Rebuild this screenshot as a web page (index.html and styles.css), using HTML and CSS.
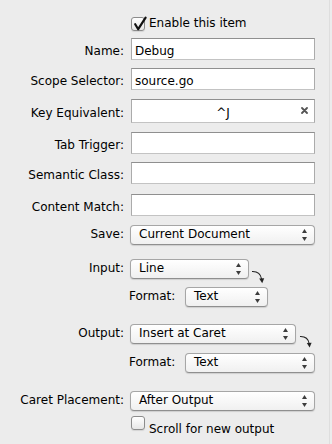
FILE: index.html
```html
<!DOCTYPE html>
<html>
<head>
<meta charset="utf-8">
<link rel="stylesheet" href="styles.css">
</head>
<body>
<div class="panel">
  <div class="check-row top">
    <span class="cb"><svg class="tick" width="16" height="16" viewBox="0 0 16 16"><path d="M4.2 7.2 L7.2 12.2 L14.6 0.6" fill="none" stroke="#111" stroke-width="2.2" stroke-linejoin="round" stroke-linecap="round"/></svg></span>
    <span class="cb-label">Enable this item</span>
  </div>

  <div class="row m7">
    <span class="lbl">Name:</span>
    <div class="field">Debug</div>
  </div>
  <div class="row m8">
    <span class="lbl">Scope Selector:</span>
    <div class="field">source.go</div>
  </div>
  <div class="row krow m9">
    <span class="lbl">Key Equivalent:</span>
    <div class="field key">^J<svg class="clear" width="7" height="7" viewBox="0 0 7 7"><path d="M1 1 L6 6 M6 1 L1 6" stroke="#555" stroke-width="1.8" stroke-linecap="round"/></svg></div>
  </div>
  <div class="row m9">
    <span class="lbl">Tab Trigger:</span>
    <div class="field"></div>
  </div>
  <div class="row m8">
    <span class="lbl">Semantic Class:</span>
    <div class="field"></div>
  </div>
  <div class="row m10">
    <span class="lbl">Content Match:</span>
    <div class="field"></div>
  </div>

  <div class="row prow m9">
    <span class="lbl">Save:</span>
    <div class="popup w-full"><span class="ptext">Current Document</span><svg class="updown" width="5" height="12" viewBox="0 0 5 12"><path d="M0 4 L2.5 0 L5 4 Z M0 8 L5 8 L2.5 12 Z" fill="#3c3c3c"/></svg></div>
  </div>

  <div class="row prow m14">
    <span class="lbl">Input:</span>
    <div class="popup w-input"><span class="ptext">Line</span><svg class="updown" width="5" height="12" viewBox="0 0 5 12"><path d="M0 4 L2.5 0 L5 4 Z M0 8 L5 8 L2.5 12 Z" fill="#3c3c3c"/></svg></div>
    <svg class="curl" width="14" height="16" viewBox="0 0 14 16"><path d="M1 3.5 C5.5 3.3 9.6 5.5 10.6 11" fill="none" stroke="#222" stroke-width="1.1"/><path d="M8.2 10.6 L13.2 10.2 L11.2 15.2 Z" fill="#222"/></svg>
  </div>
  <div class="row sub m8">
    <span class="sublbl">Format:</span>
    <div class="popup w-fmt1"><span class="ptext">Text</span><svg class="updown" width="5" height="12" viewBox="0 0 5 12"><path d="M0 4 L2.5 0 L5 4 Z M0 8 L5 8 L2.5 12 Z" fill="#3c3c3c"/></svg></div>
  </div>

  <div class="row prow m17">
    <span class="lbl">Output:</span>
    <div class="popup w-output"><span class="ptext">Insert at Caret</span><svg class="updown" width="5" height="12" viewBox="0 0 5 12"><path d="M0 4 L2.5 0 L5 4 Z M0 8 L5 8 L2.5 12 Z" fill="#3c3c3c"/></svg></div>
    <svg class="curl c2" width="14" height="16" viewBox="0 0 14 16"><path d="M1 3.5 C5.5 3.3 9.3 5.5 10.1 10.5" fill="none" stroke="#222" stroke-width="1.1"/><path d="M7.8 10 L12.6 9.8 L10.6 14.5 Z" fill="#222"/></svg>
  </div>
  <div class="row sub m9">
    <span class="sublbl">Format:</span>
    <div class="popup w-fmt2"><span class="ptext">Text</span><svg class="updown" width="5" height="12" viewBox="0 0 5 12"><path d="M0 4 L2.5 0 L5 4 Z M0 8 L5 8 L2.5 12 Z" fill="#3c3c3c"/></svg></div>
  </div>

  <div class="row prow m18">
    <span class="lbl">Caret Placement:</span>
    <div class="popup w-full"><span class="ptext">After Output</span><svg class="updown" width="5" height="12" viewBox="0 0 5 12"><path d="M0 4 L2.5 0 L5 4 Z M0 8 L5 8 L2.5 12 Z" fill="#3c3c3c"/></svg></div>
  </div>

  <div class="check-row bottom">
    <span class="cb"></span>
    <span class="cb-label">Scroll for new output</span>
  </div>
</div>
</body>
</html>
```

FILE: styles.css
```css
html, body {
  margin: 0;
  padding: 0;
  background: #ececec;
}

body {
  font-family: "DejaVu Sans", "Liberation Sans", sans-serif;
  font-size: 12px;
  line-height: 14px;
  color: #000;
}

.panel {
  box-sizing: border-box;
  width: 330px;
  height: 444px;
  padding-top: 16px;
  border-right: 1px solid #dedede;
  overflow: hidden;
}

.m7 { margin-top: 7px; }
.m8 { margin-top: 8px; }
.m9 { margin-top: 9px; }
.m10 { margin-top: 10px; }
.m14 { margin-top: 14px; }
.m17 { margin-top: 17px; }
.m18 { margin-top: 18px; }

/* checkbox rows */
.check-row {
  display: flex;
  align-items: flex-start;
  padding-left: 131px;
}

.check-row.bottom {
  margin-top: 5px;
}

.cb {
  box-sizing: border-box;
  position: relative;
  flex: none;
  width: 14px;
  height: 14px;
  border: 1px solid #8c8c8c;
  border-radius: 3px;
  background: linear-gradient(#ffffff, #e6e6e6);
  box-shadow: 0 1px 1px rgba(0, 0, 0, 0.1);
}

.check-row.top .cb {
  margin-top: 1px;
}

.tick {
  position: absolute;
  left: -1px;
  top: -1px;
  overflow: visible;
}

.cb-label {
  margin-left: 4px;
  white-space: nowrap;
}

.check-row.bottom .cb-label {
  margin-top: 6px;
}

/* label + control rows */
.row {
  display: flex;
  align-items: flex-start;
}

.lbl {
  flex: none;
  width: 124px;
  margin-right: 7px;
  margin-top: 6px;
  text-align: right;
  white-space: nowrap;
}

.krow .lbl {
  margin-top: 7px;
}

.prow .lbl {
  margin-right: 6px;
  margin-top: 2px;
}

.row.sub {
  padding-left: 129px;
}

.sublbl {
  flex: none;
  width: 48px;
  margin-right: 8px;
  margin-top: 2px;
  white-space: nowrap;
}

/* text fields */
.field {
  box-sizing: border-box;
  flex: none;
  width: 184px;
  height: 22px;
  padding: 5px 3px 1px 3px;
  background: #fff;
  border: 1px solid;
  border-color: #8f8f8f #ababab #c3c3c3 #ababab;
  white-space: nowrap;
}

.field.key {
  position: relative;
  height: 24px;
  padding: 6px 3px 2px 3px;
  text-align: center;
}

.clear {
  position: absolute;
  right: 6px;
  top: 7px;
}

/* popup buttons */
.popup {
  box-sizing: border-box;
  flex: none;
  display: flex;
  align-items: flex-start;
  height: 20px;
  padding: 1px 7px 3px 8px;
  border: 1px solid #a6a6a6;
  border-bottom-color: #8f8f8f;
  border-radius: 4px;
  background: linear-gradient(#ffffff, #f0f0f0);
  box-shadow: 0 1px 1px rgba(0, 0, 0, 0.13);
}

.ptext {
  flex: 1;
  white-space: nowrap;
}

.updown {
  flex: none;
  margin-top: 2px;
}

.w-full { width: 185px; }
.w-input { width: 119px; }
.w-fmt1 { width: 83px; }
.w-output { width: 166px; }
.w-fmt2 { width: 130px; }

.curl {
  flex: none;
  margin-left: 2px;
  margin-top: 9px;
  margin-bottom: -5px;
  overflow: visible;
}

.curl.c2 {
  margin-left: 3px;
}
```
